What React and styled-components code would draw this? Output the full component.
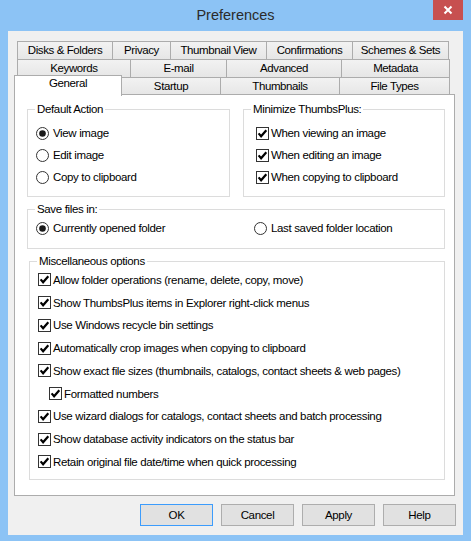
import React from "react";
import styled, { createGlobalStyle } from "styled-components";

const GlobalStyle = createGlobalStyle`
  html, body { margin: 0; padding: 0; }
  body {
    background: #8cc3f5;
    font-family: "Liberation Sans", Arial, sans-serif;
    font-size: 11px;
    color: #000;
  }
`;

const Window = styled.div`
  width: 471px;
  height: 541px;
  background: #8cc3f5;
  display: flex;
  flex-direction: column;
`;

const TitleBar = styled.div`
  height: 31px;
  display: grid;
  grid-template-columns: 1fr auto 1fr;
`;

const Title = styled.div`
  grid-column: 2;
  align-self: center;
  font-size: 14.5px;
  color: #2b2b2b;
  padding-bottom: 1px;
`;

const CloseButton = styled.div`
  grid-column: 3;
  justify-self: end;
  align-self: start;
  margin-right: 8px;
  width: 30px;
  height: 20px;
  background: #c75050;
  display: flex;
  align-items: center;
  justify-content: center;
`;

const Client = styled.div`
  margin: 0 8px 6px;
  height: 504px;
  background: #f0f0f0;
  padding-top: 10px;
  box-sizing: border-box;
  display: flex;
  flex-direction: column;
`;

const TabStrip = styled.div`
  margin: 0 11px 0 9px;
  display: flex;
  flex-direction: column;
`;

const TabRow = styled.div`
  display: flex;
  height: 18px;
  padding-left: 1px;
`;

const Tab = styled.div`
  flex: 0 0 ${(p) => p.$w}px;
  box-sizing: border-box;
  margin-left: -1px;
  border: 1px solid #acacac;
  border-bottom: none;
  background: linear-gradient(#f2f2f2, #e6e6e6);
  text-align: center;
  line-height: 17px;
  font-size: 11.5px;
  letter-spacing: -0.4px;
  white-space: nowrap;
  overflow: hidden;
`;

const ActiveTab = styled(Tab)`
  flex-basis: ${(p) => p.$w}px;
  margin: -2px 0 -1px -4px;
  height: 21px;
  line-height: 15px;
  background: #fff;
  position: relative;
  z-index: 1;
`;

const Panel = styled.div`
  margin: -1px 8px 0 6px;
  height: 402px;
  box-sizing: border-box;
  background: #fff;
  border: 1px solid #acacac;
  padding-top: 7.5px;
  display: flex;
  flex-direction: column;
`;

const TopRow = styled.div`
  display: flex;
  gap: 13px;
  padding: 0 11px 0 12px;
`;

const Group = styled.fieldset`
  margin: ${(p) => p.$m || "0"};
  padding: ${(p) => p.$p};
  border: 1px solid #dcdcdc;
  min-width: 0;
  flex: ${(p) => (p.$w ? `0 0 ${p.$w}px` : "none")};
  box-sizing: border-box;
`;

const Legend = styled.legend`
  padding: 0 2px;
  margin-left: ${(p) => p.$x}px;
  line-height: 13px;
  font-size: 11.5px;
  letter-spacing: -0.35px;
`;

const Option = styled.div`
  display: flex;
  align-items: center;
  height: ${(p) => p.$h || 22}px;
  gap: ${(p) => (p.$radio ? 4 : 2)}px;
  padding-left: ${(p) => p.$indent || 0}px;
  white-space: nowrap;
  font-size: 11.5px;
  letter-spacing: -0.35px;
`;

const SaveRow = styled.div`
  display: grid;
  grid-template-columns: 218px 1fr;
`;

const ButtonBar = styled.div`
  margin-top: 8px;
  padding-right: 7px;
  display: flex;
  justify-content: flex-end;
  gap: 8px;
`;

const Button = styled.div`
  width: 73px;
  height: 22px;
  box-sizing: border-box;
  background: #e1e1e1;
  border: 1px solid ${(p) => (p.$default ? "#3c9cfc" : "#adadad")};
  display: flex;
  align-items: center;
  justify-content: center;
  font-size: 11.5px;
  letter-spacing: -0.35px;
`;

const Radio = ({ on }) => (
  <svg width="13" height="13" viewBox="0 0 13 13">
    <circle cx="6.5" cy="6.5" r="6" fill="#fff" stroke="#333" />
    {on && <circle cx="6.5" cy="6.5" r="3.3" fill="#1a1a1a" />}
  </svg>
);

const Check = () => (
  <svg width="13" height="13" viewBox="0 0 13 13">
    <rect x="0.5" y="0.5" width="12" height="12" fill="#fff" stroke="#333" />
    <path d="M2.6 6.4 L5.1 9.3 L10.3 3.2" fill="none" stroke="#000" strokeWidth="2.2" />
  </svg>
);

const row1 = [["Disks & Folders", 96], ["Privacy", 59], ["Thumbnail View", 97], ["Confirmations", 87], ["Schemes & Sets", 97]];
const row2 = [["Keywords", 114], ["E-mail", 97], ["Advanced", 116], ["Metadata", 109]];
const row3 = [["Startup", 100], ["Thumbnails", 120], ["File Types", 111]];

const misc = [
  ["Allow folder operations (rename, delete, copy, move)"],
  ["Show ThumbsPlus items in Explorer right-click menus"],
  ["Use Windows recycle bin settings"],
  ["Automatically crop images when copying to clipboard"],
  ["Show exact file sizes  (thumbnails, catalogs, contact sheets & web pages)"],
  ["Formatted numbers", 11],
  ["Use wizard dialogs for catalogs, contact sheets and batch processing"],
  ["Show database activity indicators on the status bar"],
  ["Retain original file date/time when quick processing"],
];

export default function App() {
  return (
    <Window>
      <GlobalStyle />
      <TitleBar>
        <Title>Preferences</Title>
        <CloseButton>
          <svg width="10" height="10" viewBox="0 0 10 10">
            <path d="M1.5 1.5 L8.5 8.5 M8.5 1.5 L1.5 8.5" stroke="#fff" strokeWidth="2" />
          </svg>
        </CloseButton>
      </TitleBar>
      <Client>
        <TabStrip>
          <TabRow>
            {row1.map(([t, w]) => (
              <Tab key={t} $w={w}>{t}</Tab>
            ))}
          </TabRow>
          <TabRow>
            {row2.map(([t, w]) => (
              <Tab key={t} $w={w}>{t}</Tab>
            ))}
          </TabRow>
          <TabRow>
            <ActiveTab $w={108}>General</ActiveTab>
            {row3.map(([t, w]) => (
              <Tab key={t} $w={w}>{t}</Tab>
            ))}
          </TabRow>
        </TabStrip>
        <Panel>
          <TopRow>
            <Group $w={203} $p="6.5px 8px 8px">
              <Legend $x={-1}>Default Action</Legend>
              <Option $radio><Radio on />View image</Option>
              <Option $radio><Radio />Edit image</Option>
              <Option $radio><Radio />Copy to clipboard</Option>
            </Group>
            <Group $w={202} $p="6.5px 12px 8px">
              <Legend $x={-5}>Minimize ThumbsPlus:</Legend>
              <Option><Check />When viewing an image</Option>
              <Option><Check />When editing an image</Option>
              <Option><Check />When copying to clipboard</Option>
            </Group>
          </TopRow>
          <Group $m="5.5px 9px 0 12px" $p="1.5px 8px 9px">
            <Legend $x={-1}>Save files in:</Legend>
            <SaveRow>
              <Option $radio><Radio on />Currently opened folder</Option>
              <Option $radio><Radio />Last saved folder location</Option>
            </SaveRow>
          </Group>
          <Group $m="5.5px 9px 0 14px" $p="1.1px 8px 5.6px">
            <Legend $x={-1}>Miscellaneous options</Legend>
            {misc.map(([t, indent]) => (
              <Option key={t} $h={22.75} $indent={indent}>
                <Check />
                {t}
              </Option>
            ))}
          </Group>
        </Panel>
        <ButtonBar>
          <Button $default>OK</Button>
          <Button>Cancel</Button>
          <Button>Apply</Button>
          <Button>Help</Button>
        </ButtonBar>
      </Client>
    </Window>
  );
}
